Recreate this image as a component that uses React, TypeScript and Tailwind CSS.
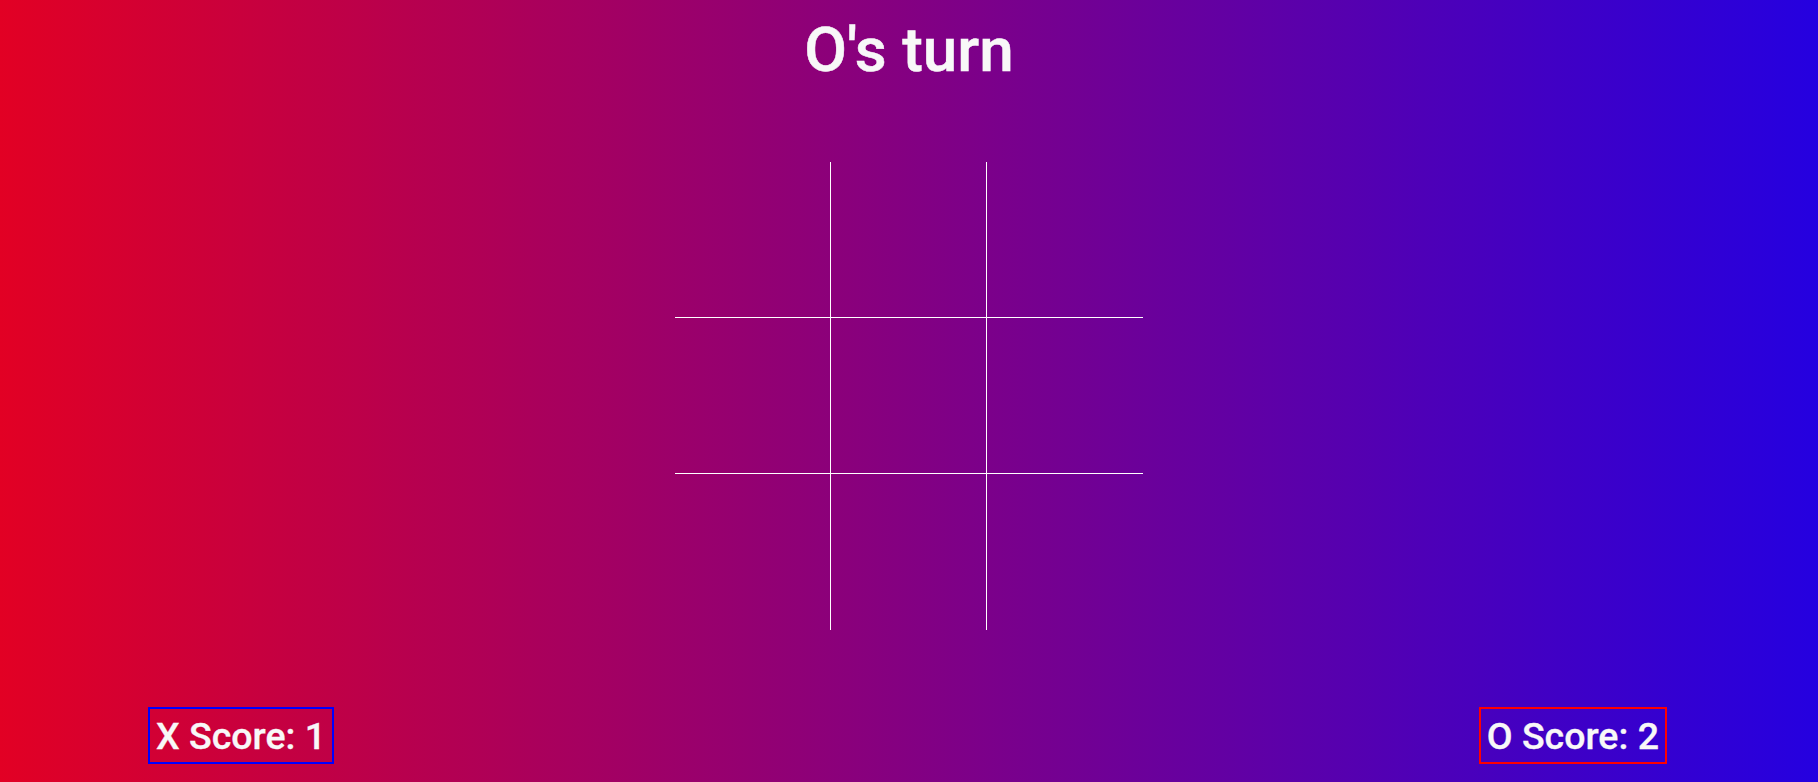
import { useState } from 'react';

type Cell = 'X' | 'O' | null;

export default function App() {
  const [board] = useState<Cell[]>(Array(9).fill(null));
  const [turn] = useState<'X' | 'O'>('O');
  const [scores] = useState({ X: 1, O: 2 });

  return (
    <div className="h-screen w-full flex flex-col bg-[linear-gradient(to_right,#e20024,#2500e0)] font-['Roboto',sans-serif] text-[#f8f8f8]">
      {/* Turn indicator */}
      <h1 className="pt-[14px] text-center text-[62px] leading-[72px] font-medium [-webkit-text-stroke:0.5px_#f8f8f8]">
        {turn}'s turn
      </h1>

      {/* Board */}
      <div className="mt-[76px] mx-auto grid grid-cols-3">
        {board.map((cell, i) => {
          const col = i % 3;
          const row = Math.floor(i / 3);
          return (
            <div
              key={i}
              className={`w-[156px] h-[156px] flex items-center justify-center text-[96px] border-white ${
                col < 2 ? 'border-r' : ''
              } ${row < 2 ? 'border-b' : ''}`}
            >
              {cell}
            </div>
          );
        })}
      </div>

      {/* Scores */}
      <div className="mt-auto pb-[18px] pl-[148px] pr-[151px] flex justify-between">
        <div className="border-2 border-[#0000ff] px-[6px] pt-[5px] pb-[4px] text-[37.5px] leading-[44px] font-medium [-webkit-text-stroke:0.3px_#f8f8f8]">
          X Score: {scores.X}
        </div>
        <div className="border-2 border-[#ff0000] px-[6px] pt-[5px] pb-[4px] text-[37.5px] leading-[44px] font-medium [-webkit-text-stroke:0.3px_#f8f8f8]">
          O Score: {scores.O}
        </div>
      </div>
    </div>
  );
}
